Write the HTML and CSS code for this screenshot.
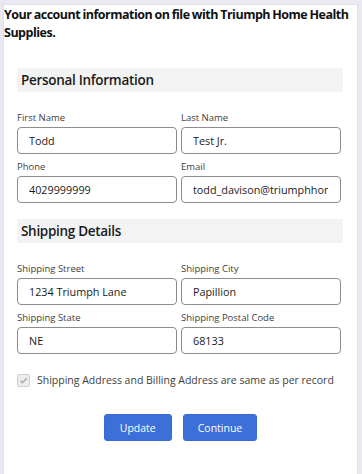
FILE: index.html
```html
<!DOCTYPE html>
<html lang="en">
<head>
<meta charset="utf-8">
<title>Account information</title>
<link rel="stylesheet" href="styles.css">
</head>
<body>
<div class="panel">
  <h1 class="intro">Your account information on file with Triumph Home Health Supplies.</h1>

  <section class="section">
    <h2 class="section-title">Personal Information</h2>
    <div class="grid">
      <div class="field">
        <label class="label">First Name</label>
        <div class="input"><span class="value">Todd</span></div>
      </div>
      <div class="field">
        <label class="label">Last Name</label>
        <div class="input"><span class="value">Test Jr.</span></div>
      </div>
      <div class="field">
        <label class="label">Phone</label>
        <div class="input"><span class="value">4029999999</span></div>
      </div>
      <div class="field">
        <label class="label">Email</label>
        <div class="input"><span class="value">todd_davison@triumphhome.com</span></div>
      </div>
    </div>
  </section>

  <section class="section section-2">
    <h2 class="section-title">Shipping Details</h2>
    <div class="grid">
      <div class="field">
        <label class="label">Shipping Street</label>
        <div class="input"><span class="value">1234 Triumph Lane</span></div>
      </div>
      <div class="field">
        <label class="label">Shipping City</label>
        <div class="input"><span class="value">Papillion</span></div>
      </div>
      <div class="field">
        <label class="label">Shipping State</label>
        <div class="input"><span class="value">NE</span></div>
      </div>
      <div class="field">
        <label class="label">Shipping Postal Code</label>
        <div class="input"><span class="value">68133</span></div>
      </div>
    </div>
  </section>

  <div class="check-row">
    <span class="checkbox"><svg width="9" height="9" viewBox="0 0 9 9"><path d="M1.5 4.8 L3.5 6.8 L7.6 2.2" fill="none" stroke="#a9a9a9" stroke-width="1.4"/></svg></span>
    <span class="check-text">Shipping Address and Billing Address are same as per record</span>
  </div>

  <div class="actions">
    <button class="btn btn-update">Update</button>
    <button class="btn">Continue</button>
  </div>
</div>
</body>
</html>
```

FILE: styles.css
```css
* { box-sizing: border-box; }

html, body {
  margin: 0;
  height: 100%;
}

body {
  background: #e9e9f2;
  padding: 4px 4px 0 3px;
  font-family: "Open Sans", "Noto Sans", sans-serif;
  color: #181818;
}

.panel {
  background: #ffffff;
  min-height: 100%;
  border: 1px solid #e0e0ea;
  border-bottom: none;
}

.intro {
  margin: 0;
  padding: 1px 0 0 0;
  font-size: 12.5px;
  line-height: 18px;
  font-weight: 700;
  color: #111;
  letter-spacing: -0.5px;
  word-spacing: -0.5px;
}

.section {
  margin: 26px 14px 0 13px;
}

.section-2 {
  margin-top: 16px;
}

.section-title {
  margin: 0;
  height: 24px;
  line-height: 24px;
  background: #f3f3f3;
  padding-left: 4px;
  font-size: 13.5px;
  font-weight: 600;
  color: #1a1a1a;
  letter-spacing: -0.3px;
}

.grid {
  display: grid;
  grid-template-columns: 160px 160px;
  column-gap: 4px;
  row-gap: 6px;
  margin-top: 19px;
}

.field {
  display: flex;
  flex-direction: column;
  min-width: 0;
}

.label {
  font-size: 9.5px;
  line-height: 14px;
  color: #3e3e3c;
  margin-bottom: 2px;
}

.input {
  height: 27px;
  border: 1px solid #8c8c8c;
  border-radius: 4px;
  padding: 0 12px 0 11px;
  font-size: 10.8px;
  line-height: 25px;
  color: #1a1a1a;
}

.value {
  display: block;
  white-space: nowrap;
  overflow: hidden;
}

.check-row {
  display: flex;
  align-items: center;
  gap: 7px;
  margin: 19px 0 0 13px;
}

.checkbox {
  width: 13px;
  height: 13px;
  border: 1px solid #cfcfcf;
  border-radius: 2px;
  background: #ececec;
  display: flex;
  align-items: center;
  justify-content: center;
}

.check-text {
  font-size: 10.5px;
  color: #3e3e3c;
  line-height: 14px;
}

.actions {
  display: flex;
  justify-content: center;
  gap: 11px;
  margin-top: 27px;
}

.btn {
  height: 27px;
  padding: 0 14px;
  background: #3c6fd8;
  color: #ffffff;
  border: 1px solid #3a6bd2;
  border-radius: 3px;
  font-family: "Open Sans", "Noto Sans", sans-serif;
  font-size: 10.5px;
}

.btn-update {
  padding: 0 15px;
}
```
